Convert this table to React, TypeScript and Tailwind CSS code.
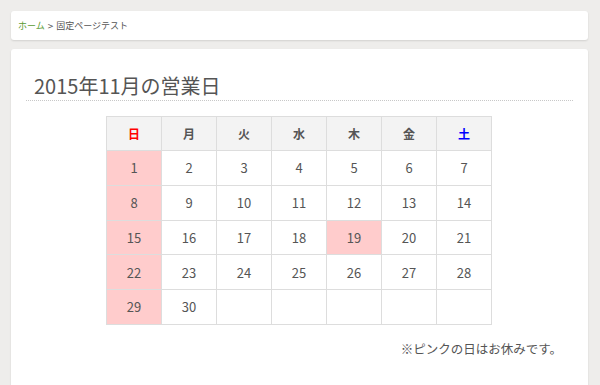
import React from "react";

const weeks: (number | null)[][] = [
  [1, 2, 3, 4, 5, 6, 7],
  [8, 9, 10, 11, 12, 13, 14],
  [15, 16, 17, 18, 19, 20, 21],
  [22, 23, 24, 25, 26, 27, 28],
  [29, 30, null, null, null, null, null],
];
const holidays = new Set([1, 8, 15, 19, 22, 29]);
const heads = ["日", "月", "火", "水", "木", "金", "土"];

export default function App() {
  return (
    <div
      className="w-[600px] h-[385px] overflow-hidden bg-[#eeedeb] pt-[11px] pl-[11px] pr-[12px]"
      style={{ fontFamily: '"Noto Sans CJK JP", "Noto Sans", sans-serif' }}
    >
      <div className="h-[29px] bg-white rounded-[3px] shadow-[0_1px_2px_rgba(0,0,0,0.12)] flex items-center pl-[7px] text-[9px] text-[#555]">
        <span className="text-[#5a9b32]">ホーム</span>
        <span className="mx-[3px] text-[10px]">&gt;</span>
        <span>固定ページテスト</span>
      </div>
      <div className="mt-[9px] h-[400px] bg-white rounded-[3px] shadow-[0_1px_2px_rgba(0,0,0,0.12)] px-[15px] pt-[23px]">
        <h1 className="text-[20px] leading-[28px] text-[#555] pl-[8px] border-b border-dotted border-[#c8c8c8]">
          2015年11月の営業日
        </h1>
        <div className="flex justify-center mt-[15px] pr-[1px]">
          <table className="border-collapse w-[386px] table-fixed">
            <thead>
              <tr className="h-[34px]">
                {heads.map((h, i) => (
                  <th
                    key={h}
                    className={`border border-[#dddddd] bg-[#f3f3f3] text-[12px] font-bold ${
                      i === 0 ? "text-[#ff0000]" : i === 6 ? "text-[#0000ff]" : "text-[#555]"
                    }`}
                  >
                    {h}
                  </th>
                ))}
              </tr>
            </thead>
            <tbody>
              {weeks.map((w, ri) => (
                <tr key={ri} className="h-[34.8px]">
                  {w.map((d, ci) => (
                    <td
                      key={ci}
                      className={`border border-[#dddddd] text-center text-[13px] text-[#555] ${
                        d !== null && holidays.has(d) ? "bg-[#ffcccc]" : "bg-white"
                      }`}
                    >
                      {d ?? ""}
                    </td>
                  ))}
                </tr>
              ))}
            </tbody>
          </table>
        </div>
        <p className="mt-[15px] text-right pr-[11px] text-[12.5px] text-[#555]">
          ※ピンクの日はお休みです。
        </p>
      </div>
    </div>
  );
}
